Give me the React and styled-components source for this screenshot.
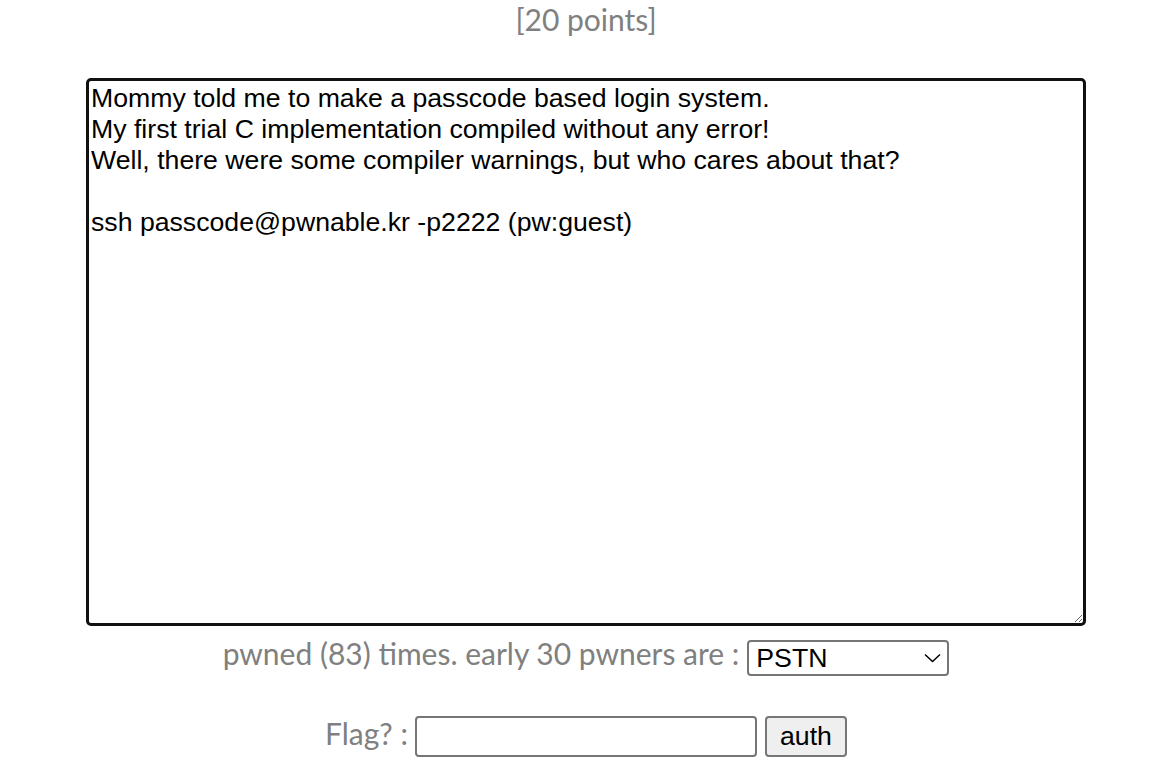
import React from "react";
import styled, { createGlobalStyle } from "styled-components";

const Global = createGlobalStyle`
  html, body { margin: 0; padding: 0; background: #fff; }
  body { font-family: "Lato", "Open Sans", sans-serif; }
`;

const Page = styled.div`
  display: flex;
  flex-direction: column;
  align-items: center;
  width: 1172px;
  color: #808080;
`;

const Points = styled.div`
  font-family: "Lato", sans-serif;
  font-size: 30px;
  line-height: 38px;
  color: #808080;
`;

const Desc = styled.textarea`
  box-sizing: border-box;
  width: 1000px;
  height: 548px;
  margin: 40px 0 0;
  border: 3px solid #111;
  border-radius: 5px;
  padding: 2px;
  font-family: "Liberation Sans", Arial, sans-serif;
  font-size: 26.67px;
  line-height: normal;
  color: #000;
  resize: both;
  outline: none;
`;

const Row = styled.div`
  display: flex;
  align-items: center;
  margin-top: ${(p) => p.$mt}px;
`;

const Label = styled.span`
  font-family: "Lato", sans-serif;
  font-size: 30px;
  line-height: 36px;
  color: #808080;
  padding-bottom: ${(p) => p.$lift}px;
  margin-right: ${(p) => p.$gap}px;
`;

const SelectWrap = styled.div`
  position: relative;
  width: 202px;
  height: 36px;
`;

const Select = styled.select`
  box-sizing: border-box;
  width: 100%;
  height: 100%;
  appearance: none;
  -webkit-appearance: none;
  font-family: "Liberation Sans", Arial, sans-serif;
  font-size: 26.67px;
  color: #000;
  border: 2px solid #767676;
  border-radius: 4px;
  background: #fff;
  padding: 0 0 0 7px;
  outline: none;
`;

const Chevron = styled.svg`
  position: absolute;
  right: 8px;
  top: 13px;
  width: 17px;
  height: 10px;
  pointer-events: none;
`;

const Input = styled.input`
  box-sizing: border-box;
  width: 342px;
  height: 41px;
  border: 2px solid #767676;
  border-radius: 4px;
  font-size: 26.67px;
  outline: none;
  margin-right: 8px;
`;

const Button = styled.button`
  box-sizing: border-box;
  width: 82px;
  height: 41px;
  padding: 0;
  font-family: "Liberation Sans", Arial, sans-serif;
  font-size: 26.67px;
  color: #000;
  background: #efefef;
  border: 2px solid #767676;
  border-radius: 4px;
`;

const text = `Mommy told me to make a passcode based login system.
My first trial C implementation compiled without any error!
Well, there were some compiler warnings, but who cares about that?

ssh passcode@pwnable.kr -p2222 (pw:guest)`;

export default function App() {
  return (
    <>
      <Global />
      <Page>
        <Points>[20 points]</Points>
        <Desc readOnly defaultValue={text} />
        <Row $mt={9}>
          <Label $lift={10} $gap={8}>pwned (83) times. early 30 pwners are :</Label>
          <SelectWrap>
            <Select defaultValue="PSTN">
              <option>PSTN</option>
            </Select>
            <Chevron viewBox="0 0 17 10">
              <path d="M1 1.5 L8.5 8.5 L16 1.5" fill="none" stroke="#000" strokeWidth="1.5" />
            </Chevron>
          </SelectWrap>
        </Row>
        <Row $mt={34}>
          <Label $lift={6} $gap={7}>Flag? :</Label>
          <Input />
          <Button>auth</Button>
        </Row>
      </Page>
    </>
  );
}
